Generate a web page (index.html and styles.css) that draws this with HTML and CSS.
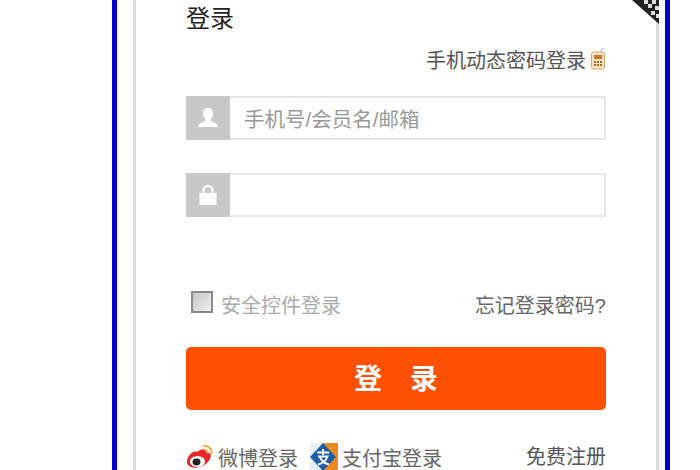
FILE: index.html
```html
<!DOCTYPE html>
<html lang="zh-CN">
  <head>
    <meta charset="UTF-8" />
    <title>登录</title>
    <link rel="stylesheet" href="styles.css">
  </head>
  <body>
    <div class="frame">
      <div class="login-box">
        <svg class="corner" viewBox="0 0 27 24" aria-hidden="true">
          <polygon points="0,0 27,0 27,24" fill="#222" />
          <path d="M12 0h4v4h-4zM20 0h4v4h-4zM16 4h4v4h-4zM23 6h4v4h-4zM19 11h4v4h-4zM24 14h3v4h-3z" fill="#ddd" />
        </svg>
        <h2 class="title">登录</h2>
        <div class="phone-login">
          <span>手机动态密码登录</span>
          <svg class="phone-icon" viewBox="0 0 16 22" aria-hidden="true">
            <path d="M11 4 12 1h2" fill="none" stroke="#9cc4e0" />
            <rect x="1.500" y="4" width="13" height="17" rx="2" fill="#f8e4c4" stroke="#d9a868" />
            <rect x="4" y="7" width="8" height="4" fill="#c9791c" />
            <path d="M4 13h2v2h-2zM7 13h2v2h-2zM10 13h2v2h-2zM4 16h2v2h-2zM7 16h2v2h-2zM10 16h2v2h-2z" fill="#a86a24" />
          </svg>
        </div>
        <div class="field">
          <span class="field-icon">
            <svg viewBox="0 0 22 22" aria-hidden="true">
              <path d="M11 1c3 0 5 2.200 5 5.500 0 2.500-1 4.500-2.500 6 0 1.500 1 2 3.500 3 2 .8 3.500 1.500 3.500 3.500v1h-19v-1c0-2 1.500-2.700 3.500-3.500 2.500-1 3.500-1.500 3.500-3-1.500-1.500-2.500-3.500-2.500-6 0-3.300 2-5.500 5-5.500z" fill="#fff" />
            </svg>
          </span>
          <span class="field-input placeholder">手机号/会员名/邮箱</span>
        </div>
        <div class="field field-password">
          <span class="field-icon">
            <svg viewBox="0 0 22 22" aria-hidden="true">
              <path d="M6.500 9V6.500a4.500 4.500 0 0 1 9 0V9" fill="none" stroke="#fff" stroke-width="2.200" />
              <rect x="2.500" y="9" width="17" height="12" fill="#fff" />
            </svg>
          </span>
          <span class="field-input"></span>
        </div>
        <div class="options">
          <label class="safe-login">
            <span class="checkbox"></span>
            <span>安全控件登录</span>
          </label>
          <a class="forgot">忘记登录密码?</a>
        </div>
        <button class="submit" type="button">登 录</button>
        <div class="other-login">
          <svg class="weibo-icon" viewBox="0 0 28 27" aria-hidden="true">
            <path d="M11 8c4-3 8-3.500 9-1.500.5 1.200.2 2.300.2 2.300s3.300-.8 4.300 1.200c1.300 3-1 7.500-6 11-5.500 3.500-12.500 3.500-16 .5-3-3-1.500-8.500 2.500-12 2.300-2 4.500-2.500 6-1.500z" fill="#e6262c" />
            <ellipse cx="11.500" cy="17.500" rx="7.500" ry="5.500" fill="#fff" />
            <ellipse cx="10.500" cy="18" rx="4" ry="3.400" fill="#222" />
            <path d="M17 2c4.500-1 9 2.500 8.500 8" fill="none" stroke="#f0b040" stroke-width="2" />
            <path d="M18 6c2.500-.5 4.200 1.200 3.800 3.500" fill="none" stroke="#f0b040" stroke-width="1.600" />
          </svg>
          <span class="weibo-text">微博登录</span>
          <svg class="alipay-icon" viewBox="0 0 28 28" aria-hidden="true">
            <rect width="28" height="28" fill="#e8eef4" />
            <polygon points="13,0 28,0 28,28 13,28" fill="#ee8a1e" />
            <polygon points="13,0 0,14 13,28 26,14" fill="#1c5fa8" />
            <path d="M7 9.500h12M13 6v6M8 13.500h9.500c-2 5-5 7-9.500 8M10 14.500c2 4 5 6 9 7" fill="none" stroke="#fff" stroke-width="2" />
          </svg>
          <span class="alipay-text">支付宝登录</span>
          <a class="register">免费注册</a>
        </div>
      </div>
    </div>
  </body>
</html>
```

FILE: styles.css
```css
* {
  box-sizing: border-box;
}
html,
body {
  height: 100%;
}
body {
  margin: 0;
  background: #fff;
  overflow: hidden;
  font-family: "Liberation Sans", "Noto Sans CJK SC", sans-serif;
  color: #555;
}
.frame {
  width: 558px;
  height: 470px;
  margin-left: 112px;
  border-left: 5px solid #0000cc;
  border-right: 5px solid #0000cc;
  padding: 0 6px 0 16px;
  overflow: hidden;
}
.login-box {
  position: relative;
  height: 470px;
  border-left: 3px solid #dcdcdc;
  border-right: 3px solid #dcdcdc;
  padding: 4px 50px 0 50px;
}
.corner {
  position: absolute;
  top: 0;
  right: -3px;
  width: 27px;
  height: 24px;
}
.title {
  margin: 0;
  font-size: 24px;
  line-height: 30px;
  font-weight: 400;
  color: #222;
}
.phone-login {
  display: flex;
  justify-content: flex-end;
  align-items: center;
  gap: 4px;
  height: 26px;
  margin-top: 12px;
  font-size: 20px;
  color: #555;
}
.phone-icon {
  width: 16px;
  height: 22px;
}
.field {
  display: flex;
  height: 44px;
  margin-top: 24px;
}
.field-password {
  margin-top: 33px;
}
.field-icon {
  display: flex;
  align-items: center;
  justify-content: center;
  width: 44px;
  background: #c8c8c8;
}
.field-icon svg {
  width: 22px;
  height: 22px;
}
.field-input {
  flex: 1;
  display: flex;
  align-items: center;
  padding-left: 14px;
  border: 2px solid #e6e6e6;
  border-left: none;
  font-size: 20.500px;
}
.placeholder {
  color: #999;
}
.options {
  display: flex;
  justify-content: space-between;
  align-items: center;
  height: 30px;
  margin-top: 72px;
  font-size: 20px;
}
.safe-login {
  display: flex;
  align-items: center;
  gap: 8px;
  padding-left: 5px;
  color: #aaa;
}
.checkbox {
  width: 22px;
  height: 22px;
  border: 2px solid #8a8a8a;
  background: linear-gradient(135deg, #c4c4c4, #f2f2f2);
  margin-top: -4px;
}
.forgot {
  color: #666;
}
.submit {
  display: block;
  width: 100%;
  height: 63px;
  margin-top: 28px;
  padding-bottom: 4px;
  border: none;
  border-radius: 5px;
  background: #ff4f00;
  color: #fff;
  font-family: inherit;
  font-size: 28px;
  font-weight: 700;
  word-spacing: 20px;
}
.other-login {
  display: flex;
  align-items: center;
  height: 30px;
  margin-top: 32px;
  font-size: 20px;
  color: #666;
}
.weibo-icon {
  width: 28px;
  height: 27px;
}
.weibo-text {
  margin-left: 4px;
}
.alipay-icon {
  width: 28px;
  height: 28px;
  margin-left: 12px;
}
.alipay-text {
  margin-left: 4px;
}
.register {
  margin-left: auto;
  color: #555;
  margin-top: -4px;
}
```
